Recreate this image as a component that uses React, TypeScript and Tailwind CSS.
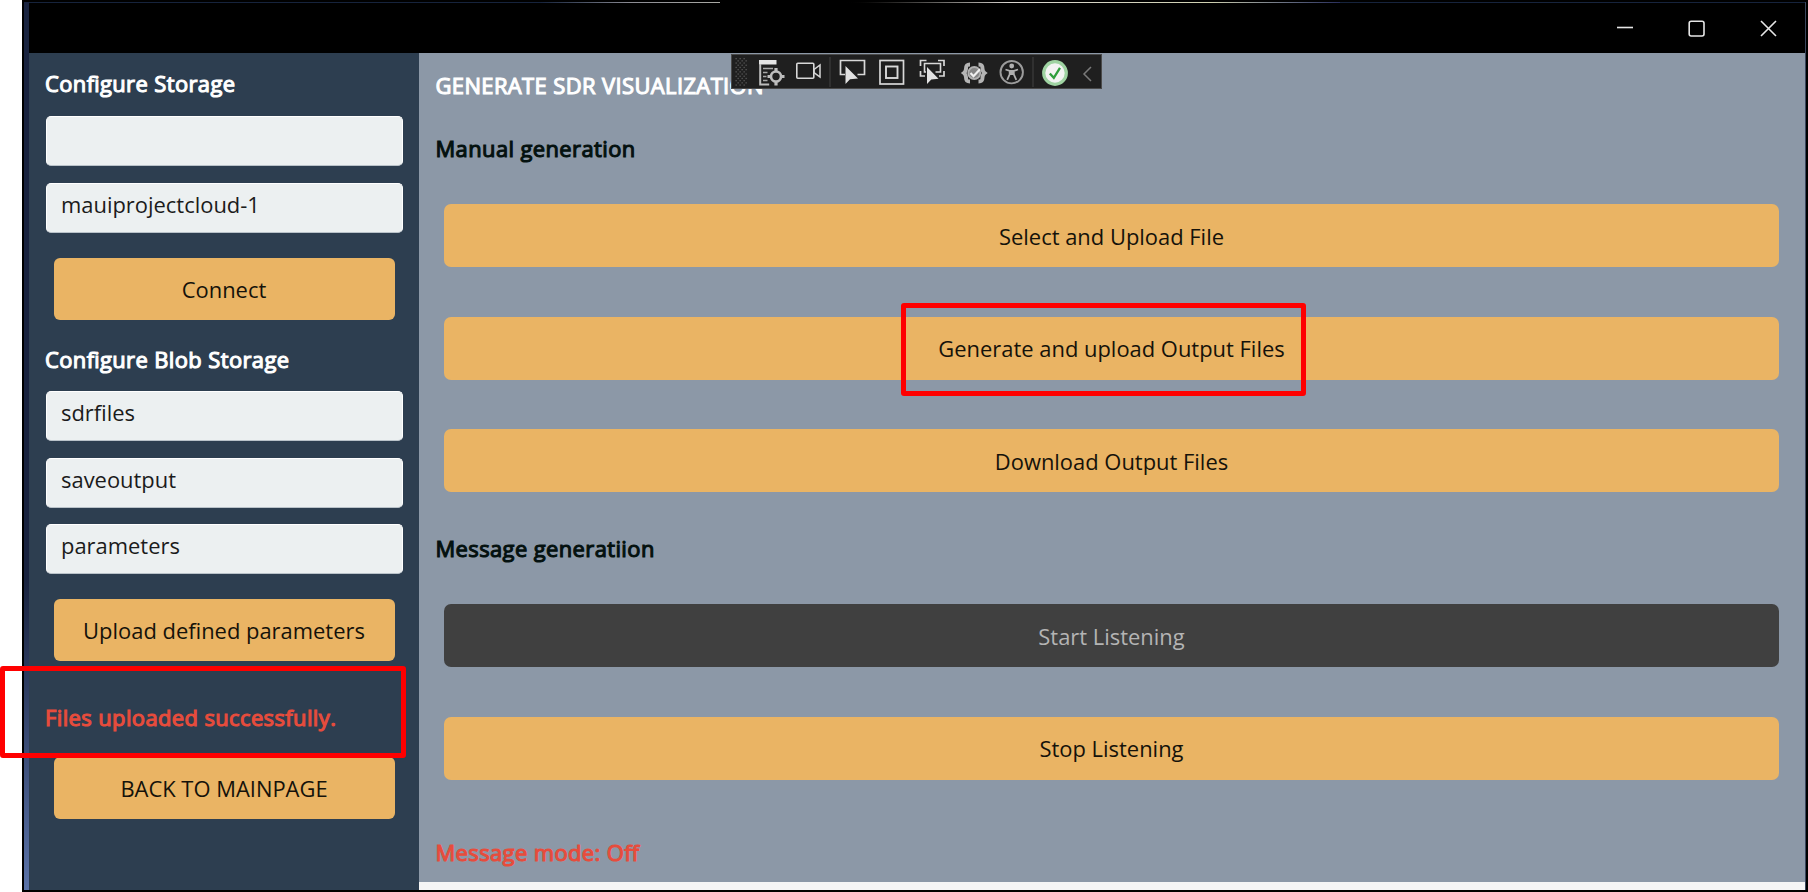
import React from "react";

const fauxBold = "tracking-[0.4px] [font-feature-settings:'liga'_1] [-webkit-text-stroke:1.1px_currentColor]";

function Field({ value, className = "" }: { value: string; className?: string }) {
  return (
    <div className={`ml-[16.5px] h-[50px] w-[357px] shrink-0 rounded-[5px] border border-b-[#b9c2c9] border-t-white border-x-white bg-[#ecf0f1] pl-[14.5px] pt-[5px] text-[#1b1b1b] ${className}`}>
      {value}
    </div>
  );
}

function SideButton({ label, className = "" }: { label: string; className?: string }) {
  return (
    <button className={`ml-[24.5px] flex h-[61.5px] w-[341px] shrink-0 items-center justify-center rounded-[6px] bg-[#eab464] pt-[2px] text-[#15120a] ${className}`}>
      {label}
    </button>
  );
}

function MainButton({ label, className = "bg-[#eab464] text-[#15120a]" }: { label: string; className?: string }) {
  return (
    <button className={`ml-[25px] flex h-[63px] w-[1335px] shrink-0 items-center justify-center rounded-[7px] pt-[2px] ${className}`}>
      {label}
    </button>
  );
}

function WindowControls() {
  return (
    <svg width="190" height="50" viewBox="1615 3 190 50" fill="none" stroke="#e6e6e6" strokeWidth="1.6">
      <path d="M1617 27.5h16" />
      <rect x="1689.2" y="21.2" width="14.8" height="14.800" rx="2" />
      <path d="M1761 21l15 15M1776 21l-15 15" />
    </svg>
  );
}

const dots = Array.from({ length: 13 }, (_, row) =>
  Array.from({ length: 3 }, (_, col) => ({ x: 735.5 + col * 4 + (row % 2) * 2, y: 58 + row * 2.2 }))
).flat();

function DebugToolbar() {
  return (
    <div className="absolute left-[731px] top-[54px] h-[35px] w-[371px]">
      <svg width="371" height="35" viewBox="731 54 371 35" fill="none">
        <rect x="731.5" y="54.5" width="370" height="34" fill="#1f1f1f" stroke="#4a4a4a" />
        {dots.map((d, i) => (
          <rect key={i} x={d.x} y={d.y} width="1.3" height="1.3" fill="#585858" />
        ))}
        <path d="M830 57v30M1033 57v30" stroke="#3d3d3d" strokeWidth="1.2" />

        <path d="M759 60h17.500v4.500H759z" fill="#e4e4e4" />
        <path d="M760.200 64v20.500h9" stroke="#bdbdbd" strokeWidth="2" />
        <path d="M763 68.500h10M763 72.500h4.500M763 76.500h3.500M763 80.500h4.500" stroke="#a8a8a8" strokeWidth="1.400" />
        <circle cx="776" cy="76.500" r="5" stroke="#bdbdbd" strokeWidth="2.600" />
        <path d="M776 68v4M776 81v4.500M767.500 76.500h4M780.500 76.500h4" stroke="#bdbdbd" strokeWidth="3.200" />

        <rect x="796.800" y="63.200" width="17" height="15" rx="1" stroke="#d8d8d8" strokeWidth="1.600" />
        <path d="M814 69.500l6-4.500v12l-6-4.500z" stroke="#d8d8d8" strokeWidth="1.500" />

        <path d="M845 74.500h-4.500V60.500h24v14h-7" stroke="#d8d8d8" strokeWidth="1.700" />
        <path d="M845.500 66v18l4.500-4.800 8-.7z" fill="#e2e2e2" />

        <rect x="880" y="60.500" width="23.500" height="23.500" stroke="#d8d8d8" strokeWidth="1.700" />
        <rect x="886" y="66.500" width="11.500" height="11.500" stroke="#d8d8d8" strokeWidth="1.900" />

        <path d="M920.500 66v-5.500h6M938 60.500h6V66M944 71v5h-5M925 76h-4.500v-5" stroke="#d8d8d8" strokeWidth="1.700" />
        <path d="M926 72h-1.500v-8.500h16V72h-5" stroke="#d8d8d8" strokeWidth="1.600" />
        <path d="M927 67v17l4.300-4.400 7.200-.8z" fill="#e2e2e2" />

        <path d="M970 64.500c-4 0-4 2-4 4.300s-.5 3-2 4.200c1.500 1.200 2 2 2 4.300s0 4.200 4 4.200M978.500 64.500c4 0 4 2 4 4.300s.5 3 2 4.200c-1.500 1.200-2 2-2 4.300s0 4.200-4 4.200" stroke="#b4b4b4" strokeWidth="4" />
        <circle cx="974.300" cy="73" r="6" fill="#858585" stroke="#b0b0b0" strokeWidth="1.800" />
        <path d="M970.500 73l3 3.200 6.500-7" stroke="#f0f0f0" strokeWidth="2.200" />

        <circle cx="1011.700" cy="72.200" r="11.200" stroke="#9c9c9c" strokeWidth="1.900" />
        <circle cx="1011.700" cy="66" r="2.400" fill="#b0b0b0" />
        <path d="M1005.500 69.500l4.200 1.300v3.500l-2.500 5.500M1018 69.500l-4.200 1.300v3.500l2.500 5.500M1009.700 71h4" stroke="#b0b0b0" strokeWidth="1.800" />
        <path d="M1009.500 70.500h4.500v4.500h-4.500z" fill="#b0b0b0" />

        <circle cx="1055" cy="73" r="11.300" fill="#f3f3f3" stroke="#9fd3a2" strokeWidth="3.200" />
        <path d="M1049.800 73.500l4 4.300 6.200-10" stroke="#2f9e3c" strokeWidth="2.300" />
        <path d="M1091 67l-7 7 7 7" stroke="#7a7a7a" strokeWidth="1.500" />
      </svg>
    </div>
  );
}

function TopEdge() {
  return (
    <div className="flex h-px shrink-0">
      <div className="w-[511px] bg-[#16233c]" />
      <div className="w-[180px] bg-linear-to-r from-[#16233c] via-[#8b8b93] to-[#a9a9a4]" />
      <div className="w-[120px] bg-black" />
      <div className="w-[170px] bg-linear-to-r from-black to-[#d8d4cf]" />
      <div className="w-[200px] bg-linear-to-r from-[#d8d4cf] to-[#cfd0b0]" />
      <div className="w-[130px] bg-linear-to-r from-[#cfd0b0] to-[#2a2f5c]" />
      <div className="grow bg-[#16233c]" />
    </div>
  );
}

export default function App() {
  return (
    <div className="relative flex h-[892px] w-[1808px] overflow-hidden bg-white pl-[22px] font-['Open_Sans',sans-serif] text-[21.93px] leading-[32px]">
      <div className="flex w-[1786px] border-2 border-black bg-black">
        <div className="w-[5px] shrink-0 bg-linear-to-b from-[#19233f] from-65% to-[#5a72a8]" />
        <div className="flex w-[1777px] flex-col border-r border-[#39465c]">
          <TopEdge />
          <header className="flex h-[50px] shrink-0 justify-end bg-black">
            <WindowControls />
          </header>
          <div className="flex h-[837px]">
            <aside className="flex w-[390px] shrink-0 flex-col bg-[#2d3e50]">
              <h2 className={`ml-4 mt-[15px] h-[30px] shrink-0 text-white ${fauxBold}`}>Configure Storage</h2>
              <Field value="" className="mt-[18px]" />
              <Field value="mauiprojectcloud-1" className="mt-[17px]" />
              <SideButton label="Connect" className="mt-[25px]" />
              <h2 className={`ml-4 mt-[24.5px] h-[30px] shrink-0 text-white ${fauxBold}`}>Configure Blob Storage</h2>
              <Field value="sdrfiles" className="mt-[17px]" />
              <Field value="saveoutput" className="mt-[17px]" />
              <Field value="parameters" className="mt-[16px]" />
              <SideButton label="Upload defined parameters" className="mt-[25px]" />
              <p className={`ml-4 mt-[41.5px] h-[30px] shrink-0 text-[#e74c3c] ${fauxBold}`}>Files uploaded successfully.</p>
              <SideButton label="BACK TO MAINPAGE" className="mt-[25px]" />
            </aside>
            <main className="flex grow flex-col bg-[#8c98a7]">
              <h1 className={`ml-[16.5px] mt-[17px] h-[30px] shrink-0 text-white ${fauxBold}`}>GENERATE SDR VISUALIZATION</h1>
              <h2 className={`ml-[16.5px] mt-[33px] h-[30px] shrink-0 text-[#04110f] ${fauxBold}`}>Manual generation</h2>
              <div className="mt-[41px] flex flex-col gap-[49.5px]">
                <MainButton label="Select and Upload File" />
                <MainButton label="Generate and upload Output Files" />
                <MainButton label="Download Output Files" />
              </div>
              <h2 className={`ml-[16.5px] mt-[41px] h-[30px] shrink-0 text-[#04110f] ${fauxBold}`}>Message generatiion</h2>
              <div className="mt-[41px] flex flex-col gap-[49.5px]">
                <MainButton label="Start Listening" className="bg-[#404040] text-[#b4b4b4]" />
                <MainButton label="Stop Listening" />
              </div>
              <p className={`ml-[16.5px] mt-[57px] h-[30px] shrink-0 text-[#e74c3c] ${fauxBold}`}>Message mode: Off</p>
              <div className="mt-auto h-2 shrink-0 bg-[#f5f5f5]" />
            </main>
          </div>
        </div>
      </div>
      <DebugToolbar />
      <div className="absolute left-[901px] top-[303px] h-[93px] w-[405px] rounded-[3px] border-[5px] border-[#ff0000]" />
      <div className="absolute left-0 top-[666px] h-[92px] w-[406px] rounded-[3px] border-[5px] border-[#ff0000]" />
    </div>
  );
}
